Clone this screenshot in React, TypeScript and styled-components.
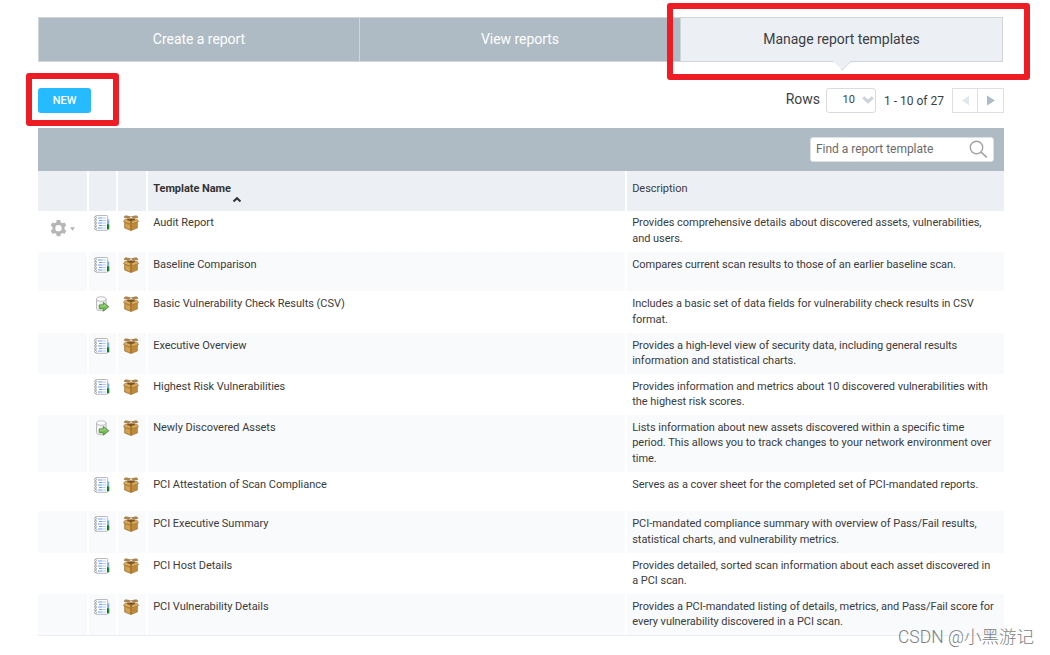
import React from 'react';
import styled, { createGlobalStyle } from 'styled-components';

const GlobalStyle = createGlobalStyle`
  * { box-sizing: border-box; }
  body { margin: 0; background: #fff; color: #3b3b3b; font-family: Roboto, "Liberation Sans", sans-serif; }
`;

const Page = styled.div`
  position: relative;
  width: 1050px;
  height: 655px;
  padding: 17px 46px 0 38px;
  overflow: hidden;
`;

const Tabs = styled.nav`
  display: grid;
  grid-template-columns: 320px 321px 322px;
  width: 965px;
  height: 45px;
  border: 1px solid #cfd5da;
  background: #aebbc4;
`;

const Tab = styled.div<{ $active?: boolean }>`
  position: relative;
  display: flex;
  align-items: center;
  justify-content: center;
  padding-bottom: 1px;
  font-size: 14px;
  line-height: 20px;
  letter-spacing: -0.04px;
  color: ${(p) => (p.$active ? '#3b3f44' : '#fff')};
  background: ${(p) => (p.$active ? '#ecf0f5' : '#aebbc4')};
  & + & { border-left: 1px solid #cfd5da; }
`;

const TabPointer = styled.svg`
  position: absolute;
  left: 151px;
  top: 43px;
`;

const Toolbar = styled.div`
  display: flex;
  justify-content: space-between;
  height: 66px;
  padding-top: 26px;
`;

const NewButton = styled.button`
  width: 53px;
  height: 25px;
  padding: 0;
  border: 0;
  border-radius: 3px;
  background: #26bbff;
  color: #fff;
  font: 500 11px/25px Roboto, sans-serif;
`;

const Pager = styled.div`
  display: flex;
  height: 25px;
  color: #3b3f44;
`;

const RowsLabel = styled.span`
  margin-right: 6px;
  font-size: 14px;
  line-height: 23px;
`;

const RowsSelect = styled.div`
  display: flex;
  width: 50px;
  height: 25px;
  padding: 0 1px 0 15.5px;
  border: 1px solid #d8dbdf;
  border-radius: 3px;
  justify-content: space-between;
  font-size: 11px;
  line-height: 21px;
  svg { margin-top: 7px; }
`;

const Range = styled.span`
  width: 76px;
  padding-left: 8px;
  white-space: nowrap;
  font-size: 12px;
  line-height: 26px;
`;

const PageButton = styled.div<{ $width: number }>`
  display: flex;
  align-items: center;
  justify-content: center;
  width: ${(p) => p.$width}px;
  height: 25px;
  border: 1px solid #dcdfe3;
  & + & { margin-left: -1px; }
`;

const SearchBar = styled.div`
  display: flex;
  justify-content: flex-end;
  width: 966px;
  height: 43px;
  padding: 9px 10px 0 0;
  background: #aebbc4;
`;

const SearchField = styled.div`
  display: flex;
  justify-content: space-between;
  width: 184px;
  height: 25px;
  padding: 0 4.6px 0 5px;
  border: 1px solid #dde2e6;
  border-radius: 3px;
  background: #fff;
  color: #6b6b6b;
  font-size: 12px;
  line-height: 22px;
  letter-spacing: -0.03px;
  svg { margin-top: 2px; }
`;

const Row = styled.div<{ $height: number; $tint?: string }>`
  display: grid;
  grid-template-columns: 49px 27px 28px 477px 377px;
  column-gap: 2px;
  width: 966px;
  height: ${(p) => p.$height}px;
  --cell: ${(p) => p.$tint ?? '#fff'};
`;

const Cell = styled.div<{ $top?: number }>`
  background: var(--cell);
  padding: ${(p) => p.$top ?? 5}px 5px 0 5.2px;
  white-space: nowrap;
  font-size: 11px;
  line-height: 15.4px;
  letter-spacing: -0.035px;
`;

const IconCell = styled(Cell)<{ $indent: number }>`
  padding: ${(p) => p.$top ?? 5}px 0 0 ${(p) => p.$indent}px;
  svg { display: block; }
`;

const ActionCell = styled(Cell)`
  display: flex;
  align-items: flex-start;
  gap: 3px;
  padding: 8.6px 0 0 12px;
`;

const HeadCell = styled(Cell)<{ $sorted?: boolean }>`
  padding-top: 10px;
  font-weight: ${(p) => (p.$sorted ? 700 : 400)};
  color: ${(p) => (p.$sorted ? '#333' : '#3b3b3b')};
`;

const SortMark = styled.svg`
  display: block;
  margin: 0 0 0 79px;
`;

const TableBody = styled.div`
  width: 966px;
  border-bottom: 1px solid #ebeef2;
`;

const Highlight = styled.div<{ $x: number; $y: number; $w: number; $h: number }>`
  position: absolute;
  left: ${(p) => p.$x}px;
  top: ${(p) => p.$y}px;
  width: ${(p) => p.$w}px;
  height: ${(p) => p.$h}px;
  border: 6px solid #ee1c25;
  border-radius: 3px;
`;

const Watermark = styled.div`
  position: absolute;
  left: 898px;
  top: 625px;
  white-space: nowrap;
  font: 300 17.5px/24px Roboto, "Noto Sans CJK SC", sans-serif;
  color: #7d7f82;
`;

const NotebookIcon = () => (
  <svg width="17" height="16" viewBox="0 0 17 16">
    <path d="M2.5.5h10.2q1 0 1 1v12.8q0 1-1 1H2.5q-1 0-1-1V1.5q0-1 1-1Z" fill="#fdfdfe" stroke="#b0b0b6" strokeWidth=".9" />
    <path d="M13.3 4.5h1.9v4.7h-1.9z" fill="#78acec" />
    <path d="M13.3 9.3h2v5h-2z" fill="#138a28" />
    <path d="M13.1 9.3h.7v5h-.7z" fill="#0b5518" />
    <path d="M4 3h4M5 5.5h3M4 8h4M5 10.5h3M4 13h4" stroke="#6f9ff0" strokeWidth="1.1" />
    <path d="M8 3h4M8 5.5h4M8 8h4M8 10.5h4M8 13h4" stroke="#b3cdf6" strokeWidth="1.1" />
    <g fill="#fff" stroke="#8b8b90" strokeWidth=".7">
      <circle cx="1.5" cy="2.4" r="1" /><circle cx="1.5" cy="5.2" r="1" />
      <circle cx="1.5" cy="8" r="1" /><circle cx="1.5" cy="10.8" r="1" />
      <circle cx="1.5" cy="13.5" r="1" />
    </g>
  </svg>
);

const ExportIcon = () => (
  <svg width="16" height="16" viewBox="0 0 16 16">
    <path d="M2.5 3v9.6c0 2.8 9.6 2.8 9.6 0V3" fill="#ececee" stroke="#b3b3b6" strokeWidth=".9" />
    <ellipse cx="7.3" cy="3" rx="4.8" ry="2.2" fill="#fbfbfb" stroke="#b6b6b9" strokeWidth=".9" />
    <path d="M4.6 6v7" stroke="#fff" strokeWidth="1.8" />
    <path d="M5.2 8.9h4.1V6.4l5.5 4.4-5.5 4.4v-2.5H5.2z" fill="#74bb52" stroke="#4a9140" strokeWidth=".9" />
    <path d="M6 10.1h4.3V8.8l2.4 2" fill="none" stroke="#b5df95" strokeWidth=".8" />
  </svg>
);

const BoxIcon = () => (
  <svg width="16" height="16" viewBox="0 0 16 16">
    <path d="m1.6 6 6.4-1.6L14.4 6v7L8 15.6 1.6 13z" fill="#c08c3e" stroke="#96692a" strokeWidth=".6" />
    <path d="m3 4.2 5-1 5 1-5 2.4z" fill="#7d5420" />
    <path d="M2.8.7 7.6 1.8 5.3 3.6.9 2.2zM8.4 1.8l4.8-1.1 1.9 1.5-4.4 1.4z" fill="#b98a45" stroke="#8d6228" strokeWidth=".6" />
    <path d="M2 4.2.4 6.6l6.2 2.1L8 6.4zM14 4.2l1.6 2.4-6.2 2.1L8 6.4z" fill="#d9ac5e" stroke="#9b6d2b" strokeWidth=".6" />
    <path d="M8 6.8v8.4" stroke="#8b6027" strokeWidth=".8" />
    <path d="m2.6 8.6 4.4 1.6v4L2.6 12.4z" fill="#d2a251" />
    <path d="m9 10.2 4.4-1.6v3.8L9 14.2z" fill="#bd8a3b" />
  </svg>
);

const GearIcon = () => (
  <svg width="17" height="17" viewBox="0 0 24 24">
    <path
      fill="#b5b5b5"
      fillRule="evenodd"
      d="m9.5 0-.6 3.3-2.3 1.3-3.1-1.2L1 7.7l2.6 2.1v3.4L1 15.3l2.5 4.3 3.1-1.2 2.3 1.3.6 3.3h5l.6-3.3 2.3-1.3 3.1 1.2 2.5-4.3-2.6-2.1V9.8L23 7.7l-2.5-4.3-3.1 1.2-2.3-1.3-.6-3.3zM12 7a4.5 4.5 0 1 1 0 9 4.5 4.5 0 0 1 0-9Z"
    />
  </svg>
);

const SmallCaret = () => (
  <svg width="5" height="4" viewBox="0 0 5 4">
    <path d="M0 .3h5L2.5 3.7z" fill="#b5b5b5" />
  </svg>
);

const CaretSlot = styled.span`
  display: flex;
  padding-top: 7.4px;
`;

type Kind = 'doc' | 'export';
const templates: { name: string; kind: Kind; height: number; top?: number; lines: string[] }[] = [
  { name: 'Audit Report', kind: 'doc', height: 41, top: 4.3, lines: ['Provides comprehensive details about discovered assets, vulnerabilities,', 'and users.'] },
  { name: 'Baseline Comparison', kind: 'doc', height: 39, lines: ['Compares current scan results to those of an earlier baseline scan.'] },
  { name: 'Basic Vulnerability Check Results (CSV)', kind: 'export', height: 42, top: 5.3, lines: ['Includes a basic set of data fields for vulnerability check results in CSV', 'format.'] },
  { name: 'Executive Overview', kind: 'doc', height: 41, lines: ['Provides a high-level view of security data, including general results', 'information and statistical charts.'] },
  { name: 'Highest Risk Vulnerabilities', kind: 'doc', height: 41, lines: ['Provides information and metrics about 10 discovered vulnerabilities with', 'the highest risk scores.'] },
  { name: 'Newly Discovered Assets', kind: 'export', height: 57, lines: ['Lists information about new assets discovered within a specific time', 'period. This allows you to track changes to your network environment over', 'time.'] },
  { name: 'PCI Attestation of Scan Compliance', kind: 'doc', height: 39, lines: ['Serves as a cover sheet for the completed set of PCI-mandated reports.'] },
  { name: 'PCI Executive Summary', kind: 'doc', height: 42, top: 5.3, lines: ['PCI-mandated compliance summary with overview of Pass/Fail results,', 'statistical charts, and vulnerability metrics.'] },
  { name: 'PCI Host Details', kind: 'doc', height: 41, lines: ['Provides detailed, sorted scan information about each asset discovered in', 'a PCI scan.'] },
  { name: 'PCI Vulnerability Details', kind: 'doc', height: 41, lines: ['Provides a PCI-mandated listing of details, metrics, and Pass/Fail score for', 'every vulnerability discovered in a PCI scan.'] },
];

export default function App() {
  return (
    <Page>
      <GlobalStyle />
      <Tabs>
        <Tab>Create a report</Tab>
        <Tab>View reports</Tab>
        <Tab $active>
          Manage report templates
          <TabPointer width="20" height="10" viewBox="0 0 20 10">
            <path d="M1 0h18l-9 9z" fill="#ecf0f5" />
            <path d="m19 .5-9 8.5-1-1" fill="none" stroke="#cfd5da" />
          </TabPointer>
        </Tab>
      </Tabs>
      <Toolbar>
        <NewButton>NEW</NewButton>
        <Pager>
          <RowsLabel>Rows</RowsLabel>
          <RowsSelect>
            10
            <svg width="12" height="9" viewBox="0 0 12 9">
              <path d="m1.3 1.3 4.7 4.4 4.7-4.4" fill="none" stroke="#ccd3d9" strokeWidth="3" />
            </svg>
          </RowsSelect>
          <Range>1 - 10 of 27</Range>
          <PageButton $width={26}>
            <svg width="7" height="11" viewBox="0 0 7 11"><path d="M7 .5v10L0 5.5z" fill="#e3e7ee" /></svg>
          </PageButton>
          <PageButton $width={27}>
            <svg width="8" height="11" viewBox="0 0 8 11"><path d="M0 .5v10l8-5z" fill="#aebbc4" /></svg>
          </PageButton>
        </Pager>
      </Toolbar>
      <SearchBar>
        <SearchField>
          Find a report template
          <svg width="19" height="19" viewBox="0 0 19 19">
            <g fill="none" stroke="#a3a3a3" strokeWidth="1.4">
              <circle cx="7.5" cy="7.5" r="6.2" />
              <path d="m12 12 5.8 5.4" strokeWidth="1.7" />
            </g>
          </svg>
        </SearchField>
      </SearchBar>
      <Row $height={40} $tint="#ecf0f5">
        <HeadCell />
        <HeadCell />
        <HeadCell />
        <HeadCell $sorted>
          Template Name
          <SortMark width="10" height="7" viewBox="0 0 10 7">
            <path d="m1.5 5.5 3.5-3.3 3.5 3.3" fill="none" stroke="#333" strokeWidth="2" />
          </SortMark>
        </HeadCell>
        <HeadCell>Description</HeadCell>
      </Row>
      <TableBody>
        {templates.map((t, i) => (
          <Row key={t.name} $height={t.height} $tint={i % 2 ? '#f8fafc' : '#fff'}>
            <ActionCell>
              {i === 0 && (
                <>
                  <GearIcon />
                  <CaretSlot><SmallCaret /></CaretSlot>
                </>
              )}
            </ActionCell>
            <IconCell $top={t.top} $indent={5}>{t.kind === 'doc' ? <NotebookIcon /> : <ExportIcon />}</IconCell>
            <IconCell $top={t.top} $indent={5}><BoxIcon /></IconCell>
            <Cell $top={t.top}>{t.name}</Cell>
            <Cell $top={t.top}>{t.lines.map((line) => <div key={line}>{line}</div>)}</Cell>
          </Row>
        ))}
      </TableBody>
      <Highlight $x={667} $y={3} $w={363} $h={77} />
      <Highlight $x={26} $y={73} $w={93} $h={53} />
      <Watermark>CSDN @小黑游记</Watermark>
    </Page>
  );
}
